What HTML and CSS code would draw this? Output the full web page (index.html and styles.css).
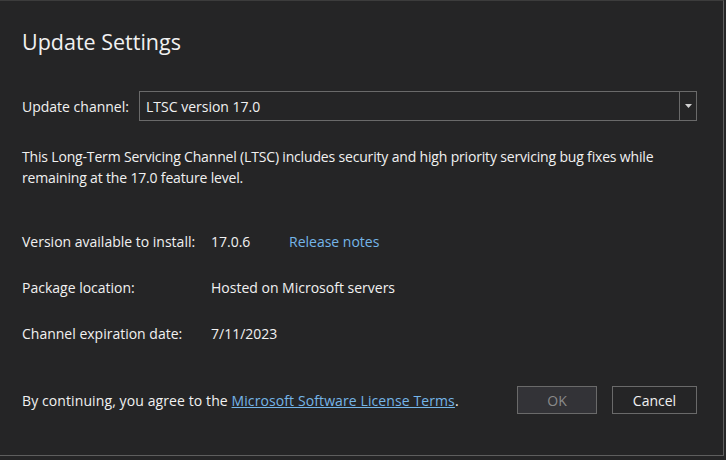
FILE: index.html
```html
<!DOCTYPE html>
<html lang="en">
<head>
<meta charset="utf-8">
<title>Update Settings</title>
<link rel="stylesheet" href="styles.css">
</head>
<body>
<div class="dialog">
  <h1 class="title">Update Settings</h1>
  <div class="channel-row">
    <label class="channel-label">Update channel:</label>
    <div class="select">
      <span class="select-value">LTSC version 17.0</span>
      <span class="select-arrow"><svg width="7" height="4" viewBox="0 0 7 4"><path d="M0 0h7L3.5 4z" fill="#d0d0d0"/></svg></span>
    </div>
  </div>
  <p class="desc">This Long-Term Servicing Channel (LTSC) includes security and high priority servicing bug fixes while<br>remaining at the 17.0 feature level.</p>
  <div class="info">
    <div class="info-row">
      <span class="info-label">Version available to install:</span>
      <span class="info-value">17.0.6</span>
      <a class="link" href="#">Release notes</a>
    </div>
    <div class="info-row">
      <span class="info-label">Package location:</span>
      <span class="info-value">Hosted on Microsoft servers</span>
    </div>
    <div class="info-row">
      <span class="info-label">Channel expiration date:</span>
      <span class="info-value">7/11/2023</span>
    </div>
  </div>
  <div class="footer">
    <p class="terms">By continuing, you agree to the <a class="link underline" href="#">Microsoft Software License Terms</a>.</p>
    <div class="buttons">
      <button class="btn btn-ok" disabled>OK</button>
      <button class="btn btn-cancel">Cancel</button>
    </div>
  </div>
</div>
</body>
</html>
```

FILE: styles.css
```css
* { box-sizing: border-box; }
html, body { margin: 0; padding: 0; background: #252526; }
body {
  font-family: "Open Sans", "Noto Sans", sans-serif;
  font-size: 14px;
  color: #f1f1f1;
  width: 726px;
  height: 460px;
  overflow: hidden;
}
.dialog {
  width: 724px;
  height: 456px;
  border-top: 1px solid #3c3c3c;
  border-right: 1px solid #5e5e5e;
  border-bottom: 1px solid #5e5e5e;
  padding: 0 26px 0 22px;
  display: flex;
  flex-direction: column;
}
.title {
  margin: 26px 0 0;
  font-size: 21.5px;
  font-weight: 400;
  line-height: 30px;
  color: #f1f1f1;
}
.channel-row {
  display: flex;
  align-items: center;
  margin-top: 34px;
  height: 30px;
}
.channel-label { width: 117px; flex: none; }
.select {
  flex: 1;
  height: 30px;
  border: 1px solid #6a6a6a;
  display: flex;
  align-items: center;
}
.select-value { flex: 1; padding-left: 6px; }
.select-arrow {
  width: 17px;
  height: 100%;
  border-left: 1px solid #6a6a6a;
  display: flex;
  align-items: center;
  justify-content: center;
}
.select-arrow svg { display: block; }
.desc {
  margin: 25px 0 0;
  line-height: 21px;
  letter-spacing: -0.17px;
}
.info { margin-top: 43px; display: flex; flex-direction: column; gap: 25px; }
.info-row { display: flex; line-height: 21px; }
.info-label { width: 189px; flex: none; }
.info-value { width: 78px; flex: none; white-space: nowrap; }
.link { color: #75b5e8; text-decoration: none; }
.underline { text-decoration: underline; }
.footer {
  margin-top: 42px;
  display: flex;
  align-items: center;
  justify-content: space-between;
}
.terms { margin: 0; line-height: 21px; letter-spacing: 0.1px; }
.buttons { display: flex; gap: 15px; }
.btn {
  font-family: inherit;
  font-size: 14px;
  height: 28px;
  border: 1px solid #6a6a6a;
  padding: 0;
  color: #f1f1f1;
  background: #252526;
}
.btn-ok { width: 80px; background: #333337; color: #8a8a8a; }
.btn-cancel { width: 85px; }
```
